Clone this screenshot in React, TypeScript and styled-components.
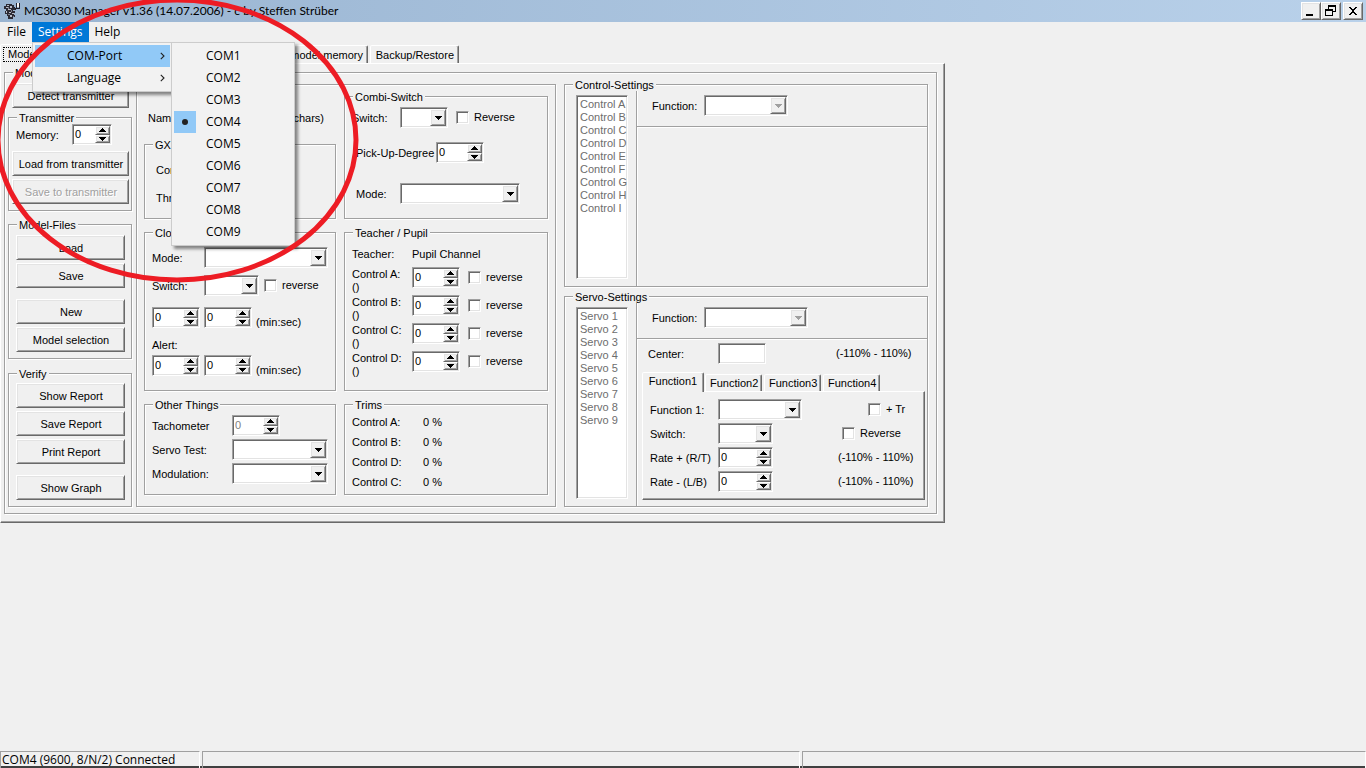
import React from 'react';
import styled, { createGlobalStyle, css } from 'styled-components';

const face = '#f0f0f0';
const shade = '#a0a0a0';
const dark = '#696969';
const light = '#e3e3e3';

const GlobalStyle = createGlobalStyle`
  * { box-sizing: border-box; }
  body {
    margin: 0;
    background: ${face};
    color: #000;
    font: 11px/13px 'Liberation Sans', Arial, sans-serif;
  }
  button, input, select { font: inherit; color: inherit; }
`;

const sunken = css`
  border: 1px solid;
  border-color: ${shade} #fff #fff ${shade};
  box-shadow: inset 1px 1px 0 ${dark}, inset -1px -1px 0 ${light};
`;

const raised = css`
  background: ${face};
  border: 1px solid;
  border-color: #fff ${dark} ${dark} #fff;
  box-shadow: inset 1px 1px 0 ${light}, inset -1px -1px 0 ${shade};
`;

const etched = css`
  border: 1px solid ${shade};
  box-shadow: 1px 1px 0 #fff, inset 1px 1px 0 #fff;
`;

const Window = styled.div`
  position: relative;
  display: flex;
  flex-direction: column;
  min-height: 100vh;
  overflow: hidden;
`;

/* Title bar */
const TitleBar = styled.header`
  display: flex;
  align-items: center;
  height: 22px;
  padding: 0 3px 0 4px;
  background: linear-gradient(90deg, #99b4d1, #b9d1ea);
`;
const Title = styled.h1`
  flex: 1;
  margin: 0 0 0 4px;
  font: 12px/18px Lato, 'Segoe UI', sans-serif;
  white-space: nowrap;
`;
const CaptionButton = styled.button<{ $apart?: boolean }>`
  ${raised}
  display: flex;
  width: 20px;
  height: 18px;
  margin-left: ${(p) => (p.$apart ? 2 : 0)}px;
  padding: 1px 2px;
`;

/* Menus */
const MenuBar = styled.nav`
  position: relative;
  z-index: 2;
  display: flex;
  height: 20px;
  padding-left: 1px;
  font: 12px/20px 'Open Sans', 'Segoe UI', sans-serif;
`;
const MenuButton = styled.button<{ $open?: boolean }>`
  height: 20px;
  padding: 0 6px;
  border: 0;
  background: ${(p) => (p.$open ? '#0078d7' : 'transparent')};
  color: ${(p) => (p.$open ? '#fff' : '#000')};
`;
const Popup = styled.ul<{ $left: number; $width: number }>`
  position: absolute;
  top: 20px;
  left: ${(p) => p.$left}px;
  width: ${(p) => p.$width}px;
  margin: 0;
  padding: 2px;
  list-style: none;
  border: 1px solid #ccc;
  background: #f2f2f2;
  box-shadow: 3px 3px 3px rgba(0, 0, 0, 0.45);
`;
const MenuItem = styled.button<{ $active?: boolean }>`
  display: flex;
  align-items: center;
  width: 100%;
  height: 22px;
  padding: 0;
  border: 0;
  background: ${(p) => (p.$active ? '#91c9f7' : 'transparent')};
  text-align: left;
`;
const MenuMark = styled.span<{ $on?: boolean }>`
  display: flex;
  align-items: center;
  justify-content: center;
  width: 22px;
  height: 22px;
  margin-right: 10px;
  background: ${(p) => (p.$on ? '#91c9f7' : 'transparent')};
`;
const MenuText = styled.span`
  flex: 1;
`;
const ChevronMark = styled.svg`
  margin-right: 5px;
`;

/* Tabs */
const TabStrip = styled.div<{ $height: number }>`
  display: flex;
  align-items: flex-end;
  height: ${(p) => p.$height}px;
`;
const Tab = styled.button<{ $width: number; $selected?: boolean }>`
  width: ${(p) => p.$width}px;
  height: ${(p) => (p.$selected ? 20 : 17)}px;
  margin: 0 ${(p) => (p.$selected ? 0 : 1)}px ${(p) => (p.$selected ? -1 : 0)}px ${(p) => (p.$selected ? 0 : 1)}px;
  padding: 0 4px ${(p) => (p.$selected ? 2 : 0)}px;
  border: solid;
  border-width: 1px 1px 0;
  border-color: #fff ${dark} transparent #fff;
  border-radius: 2px 2px 0 0;
  box-shadow: inset -1px 0 0 ${shade};
  background: ${face};
  white-space: nowrap;
  position: relative;
  z-index: ${(p) => (p.$selected ? 1 : 0)};
`;
const MainTab = styled(Tab)<{ $end?: boolean }>`
  height: ${(p) => (p.$selected ? 20 : 18)}px;
  padding: ${(p) => (p.$selected ? 0 : 2)}px 4px 0 2px;
  text-align: ${(p) => (p.$end ? 'right' : 'left')};
`;
const FocusText = styled.span`
  display: block;
  padding: 0 4px;
  border: 1px dotted #000;
`;
const TabPanel = styled.div`
  border: 1px solid;
  border-color: #fff ${dark} ${dark} #fff;
  box-shadow: inset -1px -1px 0 ${shade};
`;
const MainPanel = styled(TabPanel)`
  align-self: flex-start;
  padding: 2px 7px 8px 3px;
`;

/* Group boxes */
const Group = styled.fieldset`
  ${etched}
  min-width: 0;
  margin: 0;
  padding: 0;
`;
const Legend = styled.legend<{ $tight?: boolean }>`
  height: ${(p) => (p.$tight ? 12 : 13)}px;
  margin-left: 8px;
  padding: 0 2px;
  background: ${face};
  line-height: 15px;
`;
const Body = styled.div`
  display: grid;
  grid-template-columns: 124px 424px 372px;
  padding: 0 8px 6px 3px;
`;
const LeftColumn = styled.div`
  padding-top: 5px;
`;
const Frame = styled.div`
  ${etched}
  display: grid;
  grid-template-columns: 192px 204px;
  column-gap: 8px;
  margin: 6px 0 0 4px;
  padding: 0 7px 11px;
`;
const RightColumn = styled.div`
  display: flex;
  flex-direction: column;
  gap: 3px;
  margin-left: 8px;
`;
const Stack = styled.div<{ $pad: string; $gap?: number }>`
  display: flex;
  flex-direction: column;
  gap: ${(p) => p.$gap ?? 0}px;
  padding: ${(p) => p.$pad};
`;
const Row = styled.div<{ $indent?: number; $top?: number }>`
  display: flex;
  align-items: center;
  padding-left: ${(p) => p.$indent ?? 0}px;
  margin-top: ${(p) => p.$top ?? 0}px;
  white-space: nowrap;
`;
const Slot = styled.span<{ $width?: number }>`
  flex: none;
  width: ${(p) => (p.$width ? `${p.$width}px` : 'auto')};
  display: flex;
`;
const Caption = styled.label<{ $width?: number }>`
  flex: none;
  width: ${(p) => (p.$width ? `${p.$width}px` : 'auto')};
  padding-top: 2px;
  white-space: nowrap;
`;
const Unit = styled.span`
  align-self: flex-end;
  margin-left: 4px;
  line-height: 11px;
`;

/* Controls */
const PushButton = styled.button<{ $top?: number }>`
  ${raised}
  height: 25px;
  margin-top: ${(p) => p.$top ?? 0}px;
  padding: 2px 0 0 1px;
  width: 100%;
  &:disabled {
    color: ${shade};
    text-shadow: 1px 1px 0 #fff;
  }
`;
const FieldFrame = styled.span<{ $width: number }>`
  ${sunken}
  display: inline-flex;
  flex: none;
  width: ${(p) => p.$width}px;
  height: 21px;
  padding: 1px;
  background: #fff;
`;
const NativeSelect = styled.select`
  appearance: none;
  flex: 1;
  min-width: 0;
  padding: 0 2px;
  border: 0;
  background: transparent;
`;
const DropMark = styled.span`
  ${raised}
  display: flex;
  align-items: center;
  justify-content: center;
  width: 16px;
`;
const NumberInput = styled.input`
  flex: 1;
  min-width: 0;
  height: 15px;
  padding: 0 1px;
  border: 0;
  background: transparent;
  outline: 0;
  &:disabled { color: #808080; }
`;
const SpinButtons = styled.span`
  display: flex;
  flex-direction: column;
  width: 15px;
`;
const SpinButton = styled.button`
  ${raised}
  display: flex;
  flex: 1;
  align-items: center;
  justify-content: center;
  min-height: 0;
  padding: 0;
`;
const TextBox = styled.input`
  ${sunken}
  width: 48px;
  height: 21px;
  padding: 2px;
  background: #fff;
`;
const CheckLabel = styled.label<{ $left?: number }>`
  display: inline-flex;
  align-items: center;
  gap: 5px;
  margin-left: ${(p) => p.$left ?? 0}px;
`;
const CheckBox = styled.input`
  ${sunken}
  appearance: none;
  width: 13px;
  height: 13px;
  margin: 0;
  background: #fff;
`;
const ListBox = styled.ul<{ $height: number }>`
  ${sunken}
  flex: none;
  width: 52px;
  height: ${(p) => p.$height}px;
  margin: 4px 8px 7px 11px;
  padding: 2px 0 0 3px;
  list-style: none;
  background: #fff;
  color: #6d6d6d;
  white-space: nowrap;
`;

const TeacherRow = styled.div`
  display: grid;
  grid-template-columns: 60px 48px auto;
  justify-content: start;
  align-items: start;
  height: 28px;
`;
const TeacherLabel = styled.label`
  padding-top: 1px;
`;
const ReverseSlot = styled.span`
  display: flex;
  align-items: center;
  height: 21px;
`;
const TrimTable = styled.table`
  margin: 1px 0 2px 7px;
  border-collapse: collapse;
  td, th {
    height: 20px;
    padding: 0;
    font-weight: normal;
    text-align: left;
  }
  th { width: 71px; }
`;

/* Settings panes */
const Split = styled.div`
  display: flex;
`;
const Pane = styled.div`
  flex: 1;
  display: flex;
  flex-direction: column;
  border-left: 1px solid ${shade};
  box-shadow: inset 1px 0 0 #fff;
`;
const PaneHead = styled.div`
  display: flex;
  align-items: center;
  height: 36px;
  padding: 0 0 6px 15px;
  border-bottom: 1px solid ${shade};
  box-shadow: 0 1px 0 #fff;
`;
const FunctionTabs = styled.div`
  margin: 8px 2px 6px 5px;
`;
const FunctionPanel = styled(TabPanel)`
  display: flex;
  flex-direction: column;
  gap: 3px;
  padding: 7px;
`;
const FunctionRow = styled.div`
  display: grid;
  grid-template-columns: 68px 120px auto;
  justify-content: start;
  align-items: center;
  white-space: nowrap;
`;

/* Status bar */
const StatusBar = styled.footer`
  display: grid;
  grid-template-columns: 200px 598px 1fr;
  gap: 2px;
  height: 17px;
  margin-top: auto;
  border-bottom: 2px solid #404040;
  font: 12px/16px 'Open Sans', 'Segoe UI', sans-serif;
`;
const StatusCell = styled.div`
  padding-left: 1px;
  border: 1px solid;
  border-color: ${shade} #fff transparent ${shade};
  white-space: nowrap;
`;

const Marker = styled.svg`
  position: absolute;
  top: 0;
  left: 0;
  z-index: 3;
  pointer-events: none;
`;

const AppIcon = () => (
  <svg width="16" height="16" viewBox="0 0 16 16" shapeRendering="crispEdges" aria-hidden="true">
    <path d="M2 1h6v1h2v2h1v3h-2v1h2v2h-1v2h1v2h-2v2H4v-3H3v-2H1V8h1V6H0V3h2z" fill="#2a2a34" />
    <path d="M3 2h2v1H3zM6 3h2v2H6zM2 4h2v1H2zM4 6h3v1H4zM2 8h1v2H2zM5 9h2v1H5zM8 10h2v1H8zM6 12h2v2H6z" fill="#b9bcc8" />
    <path d="M4 4h1v2H4zM7 7h1v2H7zM4 11h2v1H4zM9 13h1v1H9z" fill="#7d8090" />
    <path d="M12 0h1v5h3v1h-4v1h-1V5h1z" fill="#20202a" />
    <path d="M13 0h2v4h-2z" fill="#f4f4f4" />
    <path d="M15 0h1v5h-1z" fill="#20202a" />
  </svg>
);

const Arrow = ({ up, color = '#000', wide = 7 }: { up?: boolean; color?: string; wide?: number }) => {
  const rows = (wide + 1) / 2;
  return (
    <svg width={wide} height={rows} viewBox={`0 0 ${wide} ${rows}`} shapeRendering="crispEdges" aria-hidden="true">
      {Array.from({ length: rows }, (_, i) => (
        <rect key={i} x={i} y={up ? rows - 1 - i : i} width={wide - 2 * i} height="1" fill={color} />
      ))}
    </svg>
  );
};

const Combo = ({ id, width, disabled, label }: { id: string; width: number; disabled?: boolean; label?: string }) => (
  <FieldFrame $width={width}>
    <NativeSelect id={id} disabled={disabled} aria-label={label}>
      <option value="" />
    </NativeSelect>
    <DropMark>
      <Arrow color={disabled ? shade : '#000'} />
    </DropMark>
  </FieldFrame>
);

const Spinner = ({ id, width = 48, disabled, label }: { id: string; width?: number; disabled?: boolean; label?: string }) => (
  <FieldFrame $width={width}>
    <NumberInput id={id} type="text" inputMode="numeric" defaultValue="0" disabled={disabled} aria-label={label} />
    <SpinButtons>
      <SpinButton type="button" aria-label="Increase"><Arrow up /></SpinButton>
      <SpinButton type="button" aria-label="Decrease"><Arrow /></SpinButton>
    </SpinButtons>
  </FieldFrame>
);

const Check = ({ text, left }: { text: string; left?: number }) => (
  <CheckLabel $left={left}>
    <CheckBox type="checkbox" />
    {text}
  </CheckLabel>
);

const Chevron = () => (
  <ChevronMark width="5" height="8" viewBox="0 0 5 8" aria-hidden="true">
    <path d="M.8 .8 4 4 .8 7.2" fill="none" stroke="#222" strokeWidth="1.1" />
  </ChevronMark>
);

const ports = ['COM1', 'COM2', 'COM3', 'COM4', 'COM5', 'COM6', 'COM7', 'COM8', 'COM9'];

const Menus = () => (
  <MenuBar>
    <MenuButton>File</MenuButton>
    <MenuButton $open>Settings</MenuButton>
    <MenuButton>Help</MenuButton>
    <Popup $left={32} $width={141}>
      <li><MenuItem $active><MenuMark /><MenuText>COM-Port</MenuText><Chevron /></MenuItem></li>
      <li><MenuItem><MenuMark /><MenuText>Language</MenuText><Chevron /></MenuItem></li>
    </Popup>
    <Popup $left={171} $width={124}>
      {ports.map((port) => (
        <li key={port}>
          <MenuItem>
            <MenuMark $on={port === 'COM4'}>
              {port === 'COM4' && (
                <svg width="6" height="6" aria-hidden="true"><circle cx="3" cy="3" r="3" fill="#222" /></svg>
              )}
            </MenuMark>
            <MenuText>{port}</MenuText>
          </MenuItem>
        </li>
      ))}
    </Popup>
  </MenuBar>
);

const Transmitter = () => (
  <LeftColumn>
    <Stack $pad="0 3px 3px 4px">
      <PushButton>Detect transmitter</PushButton>
    </Stack>
    <Group>
      <Legend>Transmitter</Legend>
      <Stack $pad="0 2px 6px 3px">
        <Row $indent={4}>
          <Caption htmlFor="memory" $width={56}>Memory:</Caption>
          <Spinner id="memory" width={40} />
        </Row>
        <PushButton $top={6}>Load from transmitter</PushButton>
        <PushButton $top={3} disabled>Save to transmitter</PushButton>
      </Stack>
    </Group>
    <Stack $pad="7px 0 0">
      <Group>
        <Legend>Model-Files</Legend>
        <Stack $pad="4px 6px 6px 7px">
          <PushButton>Load</PushButton>
          <PushButton $top={3}>Save</PushButton>
          <PushButton $top={11}>New</PushButton>
          <PushButton $top={3}>Model selection</PushButton>
        </Stack>
      </Group>
    </Stack>
    <Stack $pad="8px 0 0">
      <Group>
        <Legend>Verify</Legend>
        <Stack $pad="3px 6px 6px 7px">
          <PushButton>Show Report</PushButton>
          <PushButton $top={3}>Save Report</PushButton>
          <PushButton $top={3}>Print Report</PushButton>
          <PushButton $top={11}>Show Graph</PushButton>
        </Stack>
      </Group>
    </Stack>
  </LeftColumn>
);

const NameRow = styled.div`
  display: flex;
  justify-content: space-between;
  height: 53px;
  padding: 27px 12px 0 4px;
`;

const ClockColumn = () => (
  <div>
    <NameRow>
      <span>Name:</span>
      <span>chars)</span>
    </NameRow>
    <Group>
      <Legend>GX</Legend>
      <Stack $pad="13px 11px 13px" $gap={15}>
        <span>Con</span>
        <span>Thr</span>
      </Stack>
    </Group>
    <Stack $pad="7px 0">
      <Group>
        <Legend>Clock</Legend>
        <Stack $pad="8px 7px 14px">
          <Row>
            <Caption htmlFor="clock-mode" $width={52}>Mode:</Caption>
            <Combo id="clock-mode" width={124} />
          </Row>
          <Row $top={7}>
            <Caption htmlFor="clock-switch" $width={52}>Switch:</Caption>
            <Combo id="clock-switch" width={55} />
            <Check text="reverse" left={5} />
          </Row>
          <Row $top={11}>
            <Slot $width={52}><Spinner id="clock-min" label="Minutes" /></Slot>
            <Spinner id="clock-sec" label="Seconds" />
            <Unit>(min:sec)</Unit>
          </Row>
          <Row $top={11}>Alert:</Row>
          <Row $top={3}>
            <Slot $width={52}><Spinner id="alert-min" label="Alert minutes" /></Slot>
            <Spinner id="alert-sec" label="Alert seconds" />
            <Unit>(min:sec)</Unit>
          </Row>
        </Stack>
      </Group>
    </Stack>
    <Group>
      <Legend>Other Things</Legend>
      <Stack $pad="4px 7px 10px" $gap={3}>
        <Row>
          <Caption htmlFor="tacho" $width={80}>Tachometer</Caption>
          <Spinner id="tacho" disabled />
        </Row>
        <Row>
          <Caption htmlFor="servo-test" $width={80}>Servo Test:</Caption>
          <Combo id="servo-test" width={96} />
        </Row>
        <Row>
          <Caption htmlFor="modulation" $width={80}>Modulation:</Caption>
          <Combo id="modulation" width={96} />
        </Row>
      </Stack>
    </Group>
  </div>
);

const PupilColumn = () => (
  <Stack $pad="5px 0 0" $gap={7}>
    <Group>
      <Legend>Combi-Switch</Legend>
      <Stack $pad="4px 7px 14px">
        <Row>
          <Caption htmlFor="combi-switch" $width={48}>Switch:</Caption>
          <Combo id="combi-switch" width={48} />
          <Check text="Reverse" left={8} />
        </Row>
        <Row $top={14} $indent={4}>
          <Caption htmlFor="pickup" $width={80}>Pick-Up-Degree</Caption>
          <Spinner id="pickup" />
        </Row>
        <Row $top={20} $indent={4}>
          <Caption htmlFor="combi-mode" $width={44}>Mode:</Caption>
          <Combo id="combi-mode" width={120} />
        </Row>
      </Stack>
    </Group>
    <Group>
      <Legend>Teacher / Pupil</Legend>
      <Stack $pad="9px 7px 11px">
        <Row>
          <Slot $width={60}>Teacher:</Slot>
          <span>Pupil Channel</span>
        </Row>
        <Stack $pad="6px 0 0">
          {['A', 'B', 'C', 'D'].map((c) => (
            <TeacherRow key={c}>
              <TeacherLabel htmlFor={`pupil-${c}`}>Control {c}:<br />()</TeacherLabel>
              <Spinner id={`pupil-${c}`} />
              <ReverseSlot><Check text="reverse" left={8} /></ReverseSlot>
            </TeacherRow>
          ))}
        </Stack>
      </Stack>
    </Group>
    <Group>
      <Legend>Trims</Legend>
      <TrimTable>
        <tbody>
          {['A', 'B', 'D', 'C'].map((c) => (
            <tr key={c}><th scope="row">Control {c}:</th><td>0 %</td></tr>
          ))}
        </tbody>
      </TrimTable>
    </Group>
  </Stack>
);

const SettingsColumn = () => (
  <RightColumn>
    <Group>
      <Legend>Control-Settings</Legend>
      <Split>
        <ListBox $height={184}>
          {['A', 'B', 'C', 'D', 'E', 'F', 'G', 'H', 'I'].map((c) => <li key={c}>Control {c}</li>)}
        </ListBox>
        <Pane>
          <PaneHead>
            <Caption htmlFor="control-function" $width={52}>Function:</Caption>
            <Combo id="control-function" width={84} disabled />
          </PaneHead>
        </Pane>
      </Split>
    </Group>
    <Group>
      <Legend>Servo-Settings</Legend>
      <Split>
        <ListBox $height={192}>
          {[1, 2, 3, 4, 5, 6, 7, 8, 9].map((n) => <li key={n}>Servo {n}</li>)}
        </ListBox>
        <Pane>
          <PaneHead>
            <Caption htmlFor="servo-function" $width={52}>Function:</Caption>
            <Combo id="servo-function" width={104} disabled />
          </PaneHead>
          <Row $indent={11} $top={4}>
            <Caption htmlFor="center" $width={70}>Center:</Caption>
            <Slot $width={118}><TextBox id="center" /></Slot>
            <span>(-110% - 110%)</span>
          </Row>
          <FunctionTabs>
            <TabStrip $height={19}>
              <Tab $width={62} $selected>Function1</Tab>
              <Tab $width={57}>Function2</Tab>
              <Tab $width={57}>Function3</Tab>
              <Tab $width={57}>Function4</Tab>
            </TabStrip>
            <FunctionPanel>
              <FunctionRow>
                <Caption htmlFor="function-1">Function 1:</Caption>
                <Combo id="function-1" width={84} />
                <Check text="+ Tr" left={30} />
              </FunctionRow>
              <FunctionRow>
                <Caption htmlFor="function-switch">Switch:</Caption>
                <Combo id="function-switch" width={55} />
                <Check text="Reverse" left={4} />
              </FunctionRow>
              <FunctionRow>
                <Caption htmlFor="rate-plus">Rate + (R/T)</Caption>
                <Spinner id="rate-plus" width={55} />
                <span>(-110% - 110%)</span>
              </FunctionRow>
              <FunctionRow>
                <Caption htmlFor="rate-minus">Rate - (L/B)</Caption>
                <Spinner id="rate-minus" width={55} />
                <span>(-110% - 110%)</span>
              </FunctionRow>
            </FunctionPanel>
          </FunctionTabs>
        </Pane>
      </Split>
    </Group>
  </RightColumn>
);

export default function App() {
  return (
    <Window>
      <GlobalStyle />
      <TitleBar>
        <AppIcon />
        <Title>MC3030 Manager v1.36 (14.07.2006) - c by Steffen Strüber</Title>
        <CaptionButton aria-label="Minimize">
          <svg width="14" height="13" shapeRendering="crispEdges"><path d="M2 10h7v2H2z" /></svg>
        </CaptionButton>
        <CaptionButton aria-label="Restore">
          <svg width="14" height="13" shapeRendering="crispEdges">
            <path d="M4 1h8v7H9V7h2V3H5v2H4z" />
            <path fillRule="evenodd" d="M1 5h8v7H1zM2 7v4h6V7z" />
          </svg>
        </CaptionButton>
        <CaptionButton aria-label="Close" $apart>
          <svg width="14" height="13" shapeRendering="crispEdges">
            <path d="M3 3h2v1h1v1h2V4h1V3h2v1h-1v1H9v1H8v2h1v1h1v1h1v1H9v-1H8V9H6v1H5v1H3v-1h1V9h1V8h1V6H5V5H4V4H3z" />
          </svg>
        </CaptionButton>
      </TitleBar>
      <Menus />
      <TabStrip $height={21}>
        <MainTab $width={80} $selected><FocusText>Model</FocusText></MainTab>
        <MainTab $width={287} $end>model memory</MainTab>
        <MainTab $width={89} $end>Backup/Restore</MainTab>
      </TabStrip>
      <MainPanel>
        <Group>
          <Legend $tight>Model</Legend>
          <Body>
            <Transmitter />
            <Frame>
              <ClockColumn />
              <PupilColumn />
            </Frame>
            <SettingsColumn />
          </Body>
        </Group>
      </MainPanel>
      <StatusBar>
        <StatusCell>COM4 (9600, 8/N/2) Connected</StatusCell>
        <StatusCell />
        <StatusCell />
      </StatusBar>
      <Marker width="364" height="288" viewBox="0 0 364 288" aria-hidden="true">
        <ellipse cx="177" cy="140" rx="179" ry="140" fill="none" stroke="#ed1c24" strokeWidth="5" />
      </Marker>
    </Window>
  );
}
